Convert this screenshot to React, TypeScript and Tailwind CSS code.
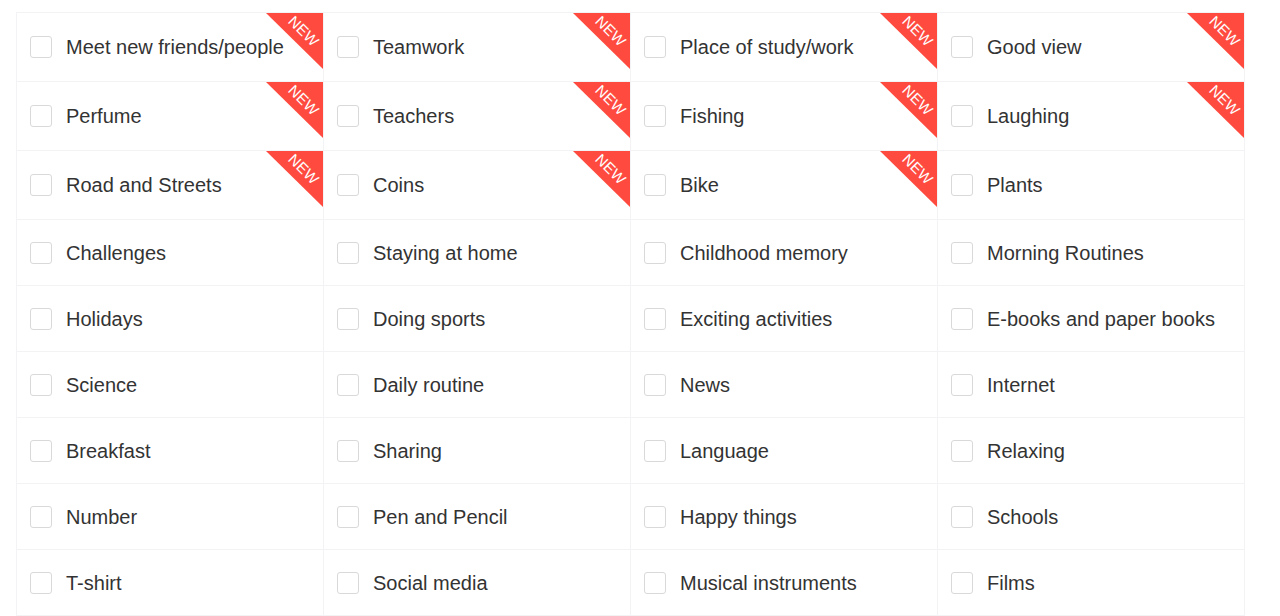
import React from 'react';

type Topic = {
  label: string;
  isNew?: boolean;
};

const ROWS: Topic[][] = [
  [
    { label: 'Meet new friends/people', isNew: true },
    { label: 'Teamwork', isNew: true },
    { label: 'Place of study/work', isNew: true },
    { label: 'Good view', isNew: true },
  ],
  [
    { label: 'Perfume', isNew: true },
    { label: 'Teachers', isNew: true },
    { label: 'Fishing', isNew: true },
    { label: 'Laughing', isNew: true },
  ],
  [
    { label: 'Road and Streets', isNew: true },
    { label: 'Coins', isNew: true },
    { label: 'Bike', isNew: true },
    { label: 'Plants' },
  ],
  [{ label: 'Challenges' }, { label: 'Staying at home' }, { label: 'Childhood memory' }, { label: 'Morning Routines' }],
  [{ label: 'Holidays' }, { label: 'Doing sports' }, { label: 'Exciting activities' }, { label: 'E-books and paper books' }],
  [{ label: 'Science' }, { label: 'Daily routine' }, { label: 'News' }, { label: 'Internet' }],
  [{ label: 'Breakfast' }, { label: 'Sharing' }, { label: 'Language' }, { label: 'Relaxing' }],
  [{ label: 'Number' }, { label: 'Pen and Pencil' }, { label: 'Happy things' }, { label: 'Schools' }],
  [{ label: 'T-shirt' }, { label: 'Social media' }, { label: 'Musical instruments' }, { label: 'Films' }],
];

const NewRibbon = () => (
  <div className="pointer-events-none absolute top-0 right-0 h-[56px] w-[57px]">
    <div className="absolute inset-0 bg-[#ff4b3f] [clip-path:polygon(0_0,100%_0,100%_100%)]" />
    <span className="absolute top-[18px] right-[19px] translate-x-1/2 -translate-y-1/2 rotate-45 text-[15px] leading-none tracking-[0.3px] text-white">
      NEW
    </span>
  </div>
);

const TopicCell = ({ topic, tall }: { topic: Topic; tall: boolean }) => {
  const [checked, setChecked] = React.useState(false);

  return (
    <label
      className={`relative flex cursor-pointer items-center overflow-hidden border-r border-b border-[#f3f3f6] pl-[13px] ${
        tall ? 'h-[69px]' : 'h-[66px]'
      }`}
    >
      <input
        type="checkbox"
        className="sr-only"
        checked={checked}
        onChange={() => setChecked(!checked)}
      />
      <span
        className={`flex h-[22px] w-[22px] shrink-0 items-center justify-center rounded-[3px] border ${
          checked ? 'border-[#ff4b3f] bg-[#ff4b3f]' : 'border-[#d9d9d9] bg-white'
        }`}
      >
        {checked && (
          <svg viewBox="0 0 16 16" className="h-3 w-3" fill="none" stroke="white" strokeWidth="2.2">
            <path d="M3 8.5l3.2 3L13 4.5" />
          </svg>
        )}
      </span>
      <span className="ml-[14px] text-[20px] leading-none text-[#333333]">{topic.label}</span>
      {topic.isNew && <NewRibbon />}
    </label>
  );
};

export default function App() {
  return (
    <div className="min-h-screen bg-white pt-[12px] pl-[16px] font-[family-name:'Liberation_Sans',Arial,sans-serif]">
      <div className="grid w-[1229px] grid-cols-4 border-t border-l border-[#f3f3f6]">
        {ROWS.map((row, ri) => {
          const tall = row.some((t) => t.isNew);
          return row.map((topic) => <TopicCell key={`${ri}-${topic.label}`} topic={topic} tall={tall} />);
        })}
      </div>
    </div>
  );
}
